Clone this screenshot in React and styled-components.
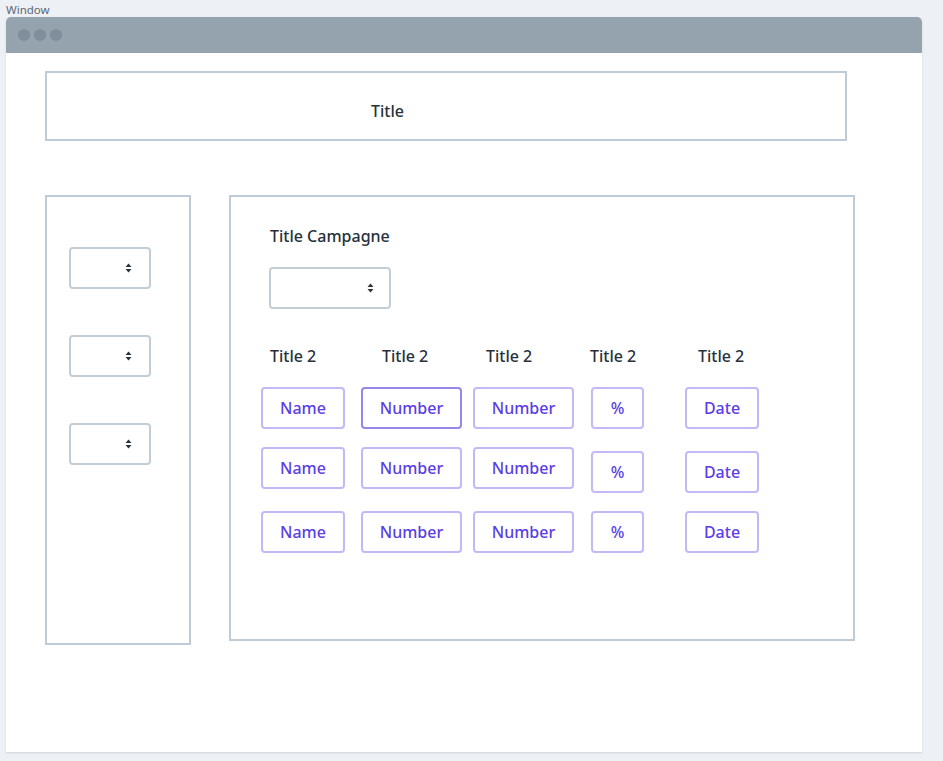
import React from 'react'
import styled, { createGlobalStyle } from 'styled-components'

const GlobalStyle = createGlobalStyle`
  html, body {
    margin: 0;
    padding: 0;
    background: #edf0f4;
    font-family: "Noto Sans", "DejaVu Sans", sans-serif;
  }
`

const columns = [
  { w: 84, ml: 0 },
  { w: 101, ml: 16 },
  { w: 101, ml: 11 },
  { w: 53, ml: 17 },
  { w: 74, ml: 41 },
]

const headWidths = [112, 104, 104, 108, 80]

const rows = [
  { cells: ['Name', 'Number', 'Number', '%', 'Date'], active: 1, drop: 0 },
  { cells: ['Name', 'Number', 'Number', '%', 'Date'], active: -1, drop: 4 },
  { cells: ['Name', 'Number', 'Number', '%', 'Date'], active: -1, drop: 0 },
]

const Arrows = () => (
  <svg width="7" height="10" viewBox="0 0 7 10">
    <path d="M3.5 0.5 L6.5 4 L0.5 4 Z" fill="#2a323c" />
    <path d="M3.5 9.5 L6.5 6 L0.5 6 Z" fill="#2a323c" />
  </svg>
)

const App = () => {
  return (
    <Page>
      <GlobalStyle />
      <Label>Window</Label>
      <Window>
        <TitleBar>
          <Dot />
          <Dot />
          <Dot />
        </TitleBar>
        <Body>
          <TitleBox>Title</TitleBox>
          <Content>
            <Sidebar>
              <Select $w={82} $pr={17}><Arrows /></Select>
              <Select $w={82} $pr={17}><Arrows /></Select>
              <Select $w={82} $pr={17}><Arrows /></Select>
            </Sidebar>
            <Main>
              <Heading>Title Campagne</Heading>
              <CampaignSelect $w={122} $pr={15}><Arrows /></CampaignSelect>
              <HeadRow>
                {headWidths.map((w, i) => (
                  <Head key={i} $w={w}>Title 2</Head>
                ))}
              </HeadRow>
              <Table>
                {rows.map((row, r) => (
                  <Row key={r}>
                    {row.cells.map((c, i) => (
                      <Cell
                        key={i}
                        $w={columns[i].w}
                        $ml={columns[i].ml}
                        $mt={i >= 3 ? row.drop : 0}
                        $active={row.active === i}
                      >
                        {c}
                      </Cell>
                    ))}
                  </Row>
                ))}
              </Table>
            </Main>
          </Content>
        </Body>
      </Window>
    </Page>
  )
}

export default App

const Page = styled.div`
  padding: 2px 21px 8px 6px;
  min-height: 761px;
  box-sizing: border-box;
`

const Label = styled.div`
  font-size: 11.5px;
  line-height: 15px;
  color: #5b6876;
  height: 15px;
`

const Window = styled.div`
  width: 916px;
  height: 735px;
  background: #ffffff;
  border-radius: 5px 5px 0 0;
  overflow: hidden;
  box-shadow: 0 1px 2px rgba(120, 135, 150, 0.25);
  display: flex;
  flex-direction: column;
`

const TitleBar = styled.div`
  height: 36px;
  background: #94a3ae;
  display: flex;
  align-items: center;
  gap: 4px;
  padding-left: 12px;
`

const Dot = styled.span`
  width: 12px;
  height: 12px;
  border-radius: 50%;
  background: #808f9b;
`

const Body = styled.div`
  padding: 18px 0 0 39px;
`

const TitleBox = styled.div`
  width: 802px;
  height: 70px;
  box-sizing: border-box;
  border: 2px solid #bfcbd6;
  display: flex;
  align-items: center;
  padding: 10px 0 0 324px;
  font-size: 16px;
  font-weight: 500;
  color: #27313c;
`

const Content = styled.div`
  display: flex;
  align-items: flex-start;
  gap: 38px;
  margin-top: 54px;
`

const Sidebar = styled.div`
  width: 146px;
  height: 450px;
  box-sizing: border-box;
  border: 2px solid #bfcbd6;
  padding: 50px 0 0 22px;
  display: flex;
  flex-direction: column;
  gap: 46px;
`

const Select = styled.div`
  width: ${p => p.$w}px;
  height: 42px;
  box-sizing: border-box;
  border: 2px solid #c2cdd6;
  border-radius: 4px;
  display: flex;
  align-items: center;
  justify-content: flex-end;
  padding-right: ${p => p.$pr}px;
`

const CampaignSelect = styled(Select)`
  margin: 21px 0 0 8px;
`

const Main = styled.div`
  width: 626px;
  height: 446px;
  box-sizing: border-box;
  border: 2px solid #bfcbd6;
  padding: 29px 0 0 30px;
  display: flex;
  flex-direction: column;
`

const Heading = styled.div`
  font-size: 16px;
  line-height: 20px;
  font-weight: 500;
  color: #27313c;
  padding-left: 9px;
`

const HeadRow = styled.div`
  display: flex;
  margin-top: 37px;
  padding-left: 9px;
`

const Head = styled.div`
  width: ${p => p.$w}px;
  flex-shrink: 0;
  font-size: 16px;
  line-height: 20px;
  font-weight: 500;
  color: #27313c;
`

const Table = styled.div`
  display: flex;
  flex-direction: column;
  gap: 18px;
  margin-top: 21px;
`

const Row = styled.div`
  display: flex;
  align-items: flex-start;
`

const Cell = styled.div`
  width: ${p => p.$w}px;
  height: 42px;
  box-sizing: border-box;
  margin-left: ${p => p.$ml}px;
  margin-top: ${p => p.$mt}px;
  border: 2px solid ${p => (p.$active ? '#9587ec' : '#c4b8f7')};
  border-radius: 4px;
  display: flex;
  align-items: center;
  justify-content: center;
  font-size: 16px;
  font-weight: 500;
  color: #5a3ee6;
`
